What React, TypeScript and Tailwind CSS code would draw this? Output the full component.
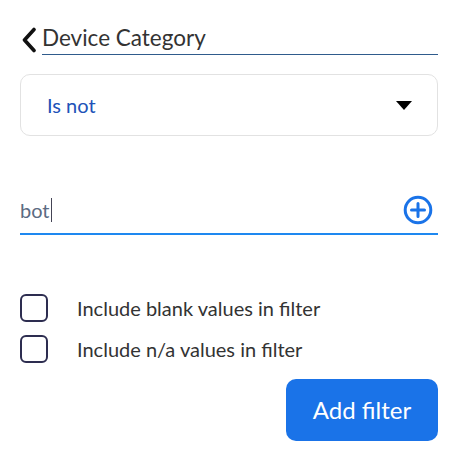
import React from "react";

export default function App() {
  return (
    <div className="w-[458px] h-[460px] bg-white px-[20px] pt-[21px]" style={{ fontFamily: "Lato, 'Noto Sans', sans-serif" }}>
      <div className="flex items-start">
        <div className="w-[22px] h-[32px] flex items-center pt-[6px] pl-[1px]">
          <svg width="16" height="26" viewBox="0 0 16 26">
            <path d="M13 2.5 L3.5 13 L13 23.5" fill="none" stroke="#111" strokeWidth="3.6" strokeLinecap="round" strokeLinejoin="round" />
          </svg>
        </div>
        <div className="flex-1 border-b border-[#2f5b8c] text-[22.5px] leading-[33px] text-[#333]">Device Category</div>
      </div>

      <div className="mt-[19px] h-[62px] rounded-[10px] border border-[#e2e2e2] flex items-center justify-between pl-[26px] pr-[25px]">
        <span className="text-[20px] text-[#2152b8]">Is not</span>
        <svg width="16" height="9" viewBox="0 0 16 9">
          <path d="M0 0 L16 0 L8 9 Z" fill="#000" />
        </svg>
      </div>

      <div className="mt-[57px] h-[42px] border-b-2 border-[#1e88f0] flex items-center justify-between pr-[5px] pb-[6px]">
        <div className="flex items-center">
          <span className="text-[20px] text-[#5b6b82]">bot</span>
          <span className="w-[1px] h-[24px] bg-[#445] ml-[1px]"></span>
        </div>
        <svg width="30" height="30" viewBox="0 0 30 30">
          <circle cx="15" cy="15" r="12.8" fill="none" stroke="#1a73e8" strokeWidth="3" />
          <path d="M15 8.5 V21.5 M8.5 15 H21.5" stroke="#1a73e8" strokeWidth="3" strokeLinecap="round" />
        </svg>
      </div>

      <div className="mt-[59px] flex flex-col gap-[13px]">
        <div className="flex items-center h-[28px]">
          <div className="w-[28px] h-[28px] rounded-[6px] border-[2.5px] border-[#2d2d50]"></div>
          <span className="ml-[29px] text-[20px] leading-[28px] text-[#333]">Include blank values in filter</span>
        </div>
        <div className="flex items-center h-[28px]">
          <div className="w-[28px] h-[28px] rounded-[6px] border-[2.5px] border-[#2d2d50]"></div>
          <span className="ml-[29px] text-[20px] leading-[28px] text-[#333]">Include n/a values in filter</span>
        </div>
      </div>

      <div className="mt-[16px] flex justify-end">
        <button className="w-[152px] h-[62px] rounded-[10px] bg-[#1a73e8] text-white text-[24px]">Add filter</button>
      </div>
    </div>
  );
}
